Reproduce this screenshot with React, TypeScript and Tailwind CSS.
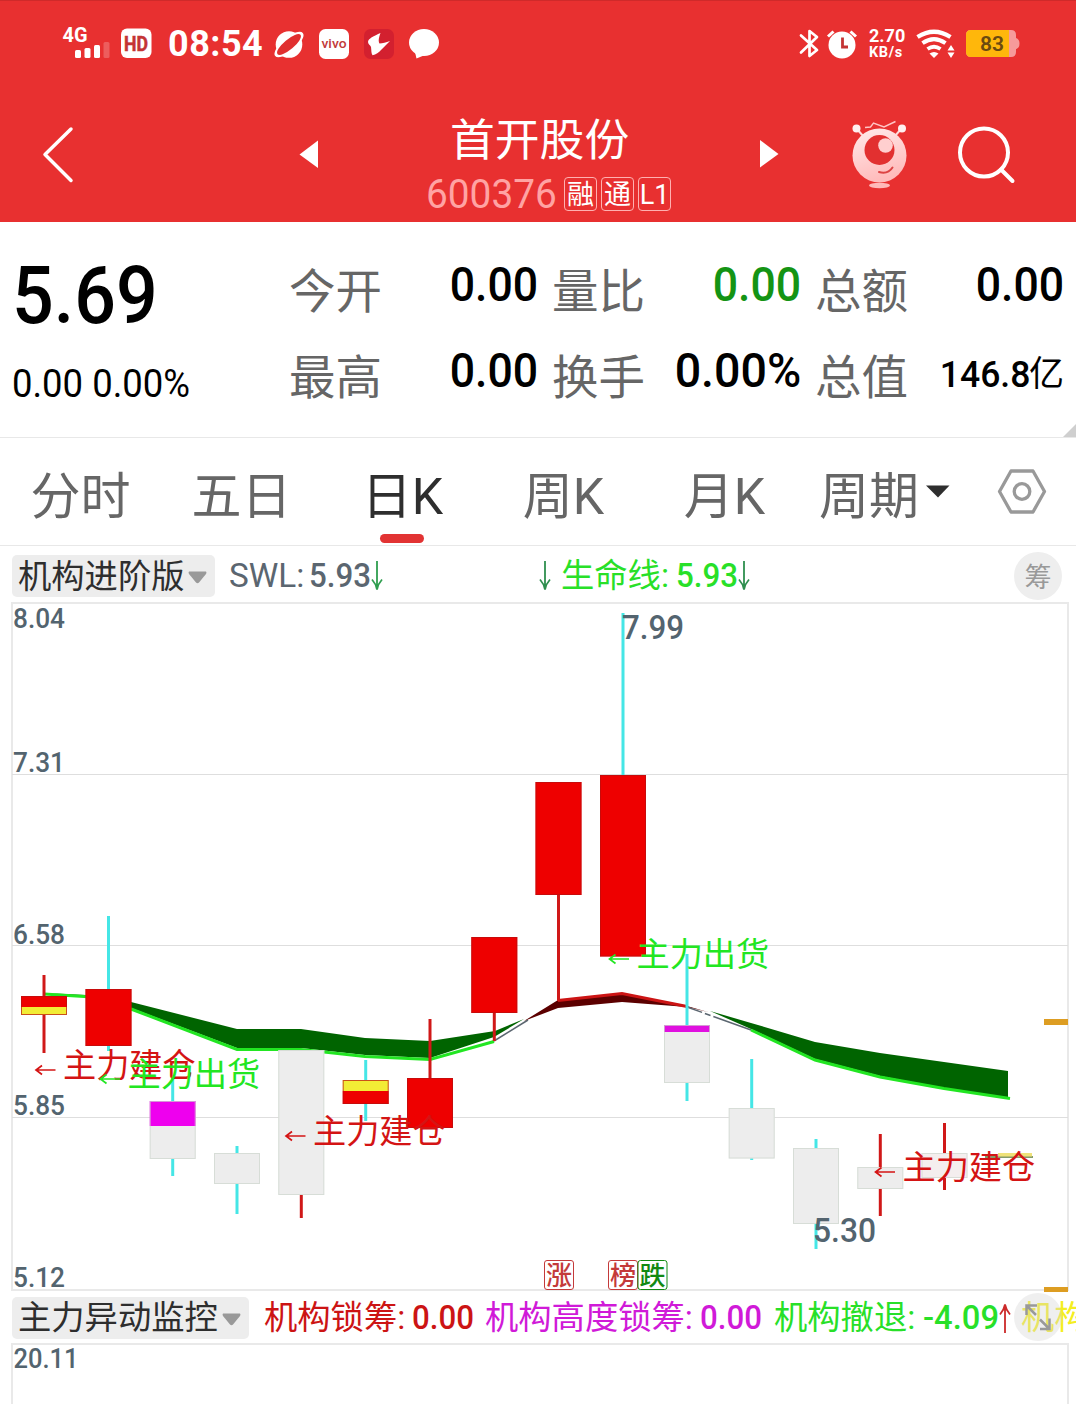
import type { ReactNode } from 'react';

type Candle = {
  x: number;
  top: number;
  bottom: number;
  wick: [number, number];
  wickColor: string;
  parts: { color: string; from: number; to: number }[];
};

const RED = '#ee0000';
const WICK_RED = '#d01818';
const CYAN = '#45e6e6';
const GREY = '#ededed';
const YELLOW = '#f2ec35';
const MAGENTA = '#ee00ee';

const quotes = [
  { label: '今开', value: '0.00' },
  { label: '量比', value: '0.00', color: 'text-[#149414]' },
  { label: '总额', value: '0.00' },
  { label: '最高', value: '0.00' },
  { label: '换手', value: '0.00%' },
  { label: '总值', value: '146.8', unit: '亿' },
];

const tabs = ['分时', '五日', '日K', '周K', '月K'];

const gridLines = [775, 946, 1118];

const axisLabels = [
  { text: '8.04', y: 628 },
  { text: '7.31', y: 772 },
  { text: '6.58', y: 944 },
  { text: '5.85', y: 1115 },
  { text: '5.12', y: 1287 },
];

const candles: Candle[] = [
  { x: 44, top: 996, bottom: 1015, wick: [975, 1053], wickColor: WICK_RED, parts: [{ color: RED, from: 996, to: 1007 }, { color: YELLOW, from: 1007, to: 1015 }] },
  { x: 108.5, top: 989, bottom: 1046, wick: [916, 1051], wickColor: CYAN, parts: [{ color: RED, from: 989, to: 1046 }] },
  { x: 172.7, top: 1101, bottom: 1159, wick: [1075, 1176], wickColor: CYAN, parts: [{ color: MAGENTA, from: 1101, to: 1126 }, { color: GREY, from: 1126, to: 1159 }] },
  { x: 237, top: 1153, bottom: 1184, wick: [1146, 1214], wickColor: CYAN, parts: [{ color: GREY, from: 1153, to: 1184 }] },
  { x: 301.3, top: 1050, bottom: 1195, wick: [1050, 1218], wickColor: WICK_RED, parts: [{ color: GREY, from: 1050, to: 1195 }] },
  { x: 365.7, top: 1080, bottom: 1104, wick: [1060, 1121], wickColor: CYAN, parts: [{ color: YELLOW, from: 1080, to: 1091 }, { color: RED, from: 1091, to: 1104 }] },
  { x: 430, top: 1078, bottom: 1128, wick: [1019, 1128], wickColor: WICK_RED, parts: [{ color: RED, from: 1078, to: 1128 }] },
  { x: 494.3, top: 937, bottom: 1013, wick: [937, 1041], wickColor: WICK_RED, parts: [{ color: RED, from: 937, to: 1013 }] },
  { x: 558.5, top: 782, bottom: 895, wick: [782, 1001], wickColor: WICK_RED, parts: [{ color: RED, from: 782, to: 895 }] },
  { x: 623, top: 775, bottom: 956.5, wick: [613, 956], wickColor: CYAN, parts: [{ color: RED, from: 775, to: 956.5 }] },
  { x: 687, top: 1025, bottom: 1083, wick: [954, 1101], wickColor: CYAN, parts: [{ color: '#e010e0', from: 1025, to: 1032 }, { color: GREY, from: 1032, to: 1083 }] },
  { x: 751.7, top: 1108, bottom: 1158.5, wick: [1059, 1160], wickColor: CYAN, parts: [{ color: GREY, from: 1108, to: 1158.5 }] },
  { x: 816, top: 1148, bottom: 1224, wick: [1139, 1249], wickColor: CYAN, parts: [{ color: GREY, from: 1148, to: 1224 }] },
  { x: 880.3, top: 1167, bottom: 1189, wick: [1134, 1216], wickColor: WICK_RED, parts: [{ color: GREY, from: 1167, to: 1189 }] },
  { x: 944.5, top: 1153, bottom: 1178, wick: [1123, 1190], wickColor: WICK_RED, parts: [{ color: '#f4eeee', from: 1153, to: 1178 }] },
];

const signals = [
  { text: '主力建仓', x: 36, y: 1077, color: '#d41414' },
  { text: '主力出货', x: 100.5, y: 1086, color: '#22e622' },
  { text: '主力建仓', x: 286, y: 1143, color: '#d41414' },
  { text: '主力出货', x: 609.5, y: 966, color: '#22e622' },
  { text: '主力建仓', x: 875.5, y: 1179, color: '#d41414' },
];

function StatusBar() {
  return (
    <div className="flex h-[88px] items-start pt-[26px] text-white">
      <svg className="ml-[60px] h-9 w-[50px] overflow-visible" viewBox="60 26 50 36" fill="#fff">
        <text x="62.5" y="42" fontSize="20.500" fontWeight="700" textLength="25" lengthAdjust="spacingAndGlyphs">4G</text>
        <rect x="75" y="50" width="6" height="8" rx="1.5" />
        <rect x="84.500" y="48" width="6" height="10" rx="1.5" />
        <rect x="94" y="45" width="6" height="13" rx="1.5" />
        <rect x="103.500" y="42" width="6" height="16" rx="1.5" opacity=".22" />
      </svg>
      <svg className="ml-[10px] h-9 w-8" viewBox="120 26 32 36">
        <rect x="121" y="28.500" width="30.500" height="29.500" rx="6" fill="#fff" />
        <text x="124" y="50.500" fontSize="20" fontWeight="700" fill="#c43434" stroke="#c43434" strokeWidth=".5" textLength="24" lengthAdjust="spacingAndGlyphs">HD</text>
      </svg>
      <span className="ml-[16px] w-[94px] text-[36px] leading-9 font-bold tracking-[0.500px]">08:54</span>
      <svg className="ml-[11px] h-9 w-8 overflow-visible" viewBox="273 26 32 36">
        <circle cx="289" cy="44.500" r="13.300" fill="#fff" />
        <ellipse cx="289" cy="44.500" rx="18" ry="7" transform="rotate(-40 289 44.500)" fill="#fff" />
        <ellipse cx="289" cy="44.500" rx="15" ry="5" transform="rotate(-40 289 44.500)" fill="#e03030" />
      </svg>
      <svg className="ml-[13px] h-9 w-8" viewBox="318 26 32 36">
        <rect x="319" y="29" width="30" height="30" rx="6.500" fill="#fff" />
        <text x="321.500" y="48" fontSize="12" fontWeight="500" fill="#c23a3a" textLength="25" lengthAdjust="spacingAndGlyphs">vivo</text>
      </svg>
      <svg className="ml-[13px] h-9 w-8" viewBox="363 26 32 36">
        <rect x="364" y="29" width="30" height="30" rx="6.500" fill="#d3202f" />
        <path d="M380.500 33C374 36 368 38.500 368 42C368 44.500 370.500 45.200 371 47C371.500 50 371 53 372.500 55.300C376 54.500 379 52.500 381 50L390 41C386 42.600 382.500 43.500 379.500 43.500C378 41 379 37 380.500 33Z" fill="#fff" />
      </svg>
      <svg className="ml-[13px] h-9 w-8" viewBox="408 26 32 36" fill="#fff">
        <ellipse cx="424" cy="42.500" rx="15" ry="13.500" />
        <path d="M414.500 50L416.500 58.500L425 55Z" />
      </svg>
      <svg className="ml-[357px] h-9 w-6" viewBox="797 26 24 36" fill="none" stroke="#fff" strokeWidth="2.700">
        <path d="M801 35.500L817 50L809.500 56V31L817 37L801 52.500" strokeLinejoin="round" strokeLinecap="round" />
      </svg>
      <svg className="ml-[5px] h-9 w-8" viewBox="826 26 32 36">
        <circle cx="842" cy="45" r="13.500" fill="#fff" />
        <path d="M828 36.500L833.500 31.500M856 36.500L850.500 31.500" stroke="#fff" strokeWidth="3" />
        <path d="M842.500 37.500V47H848" fill="none" stroke="#c43434" strokeWidth="2.800" />
      </svg>
      <div className="ml-[11px] flex w-[37px] flex-col pt-px font-bold">
        <span className="text-[18px] leading-[18px]">2.70</span>
        <span className="pt-px text-[14.500px] leading-[14px] tracking-[0.600px]">KB/s</span>
      </div>
      <svg className="ml-[10px] h-9 w-10" viewBox="916 26 40 36" fill="none" stroke="#fff">
        <path d="M917.500 37Q934 26.500 950.500 37" strokeWidth="4.200" />
        <path d="M922.500 43.200Q934 35 945.500 43.200" strokeWidth="4" />
        <path d="M927.500 49Q934 44.500 940.500 49" strokeWidth="3.800" />
        <path d="M929.500 53.500Q934 50.500 938.500 53.500L934 58Z" fill="#fff" stroke="none" />
        <path d="M947.500 50.500L951 45L954.500 50.500ZM947.500 52.500H954.500L951 58Z" fill="#fff" stroke="none" />
      </svg>
      <svg className="ml-[10px] h-9 w-14" viewBox="966 26 56 36">
        <path d="M971 30H1011Q1016 30 1016 35V38Q1019.500 39 1019.500 43.500T1016 49V52Q1016 57 1011 57H971Q966 57 966 52V35Q966 30 971 30Z" fill="#f69a9a" />
        <path d="M971 30H1009V57H971Q966 57 966 52V35Q966 30 971 30Z" fill="#ffb70b" />
        <text x="980" y="51" fontSize="20.500" fontWeight="600" fill="#6b4a10" textLength="24" lengthAdjust="spacingAndGlyphs">83</text>
      </svg>
    </div>
  );
}

function Tag({ children }: { children: ReactNode }) {
  return (
    <span className="flex h-[34px] w-[33px] items-center justify-center rounded-[4px] border border-[#ffb0b0] text-[27px] leading-none text-white">
      <span className="pt-[3px]">{children}</span>
    </span>
  );
}

function TitleBar() {
  return (
    <div className="flex h-[134px] items-start">
      <svg className="ml-10 h-[134px] w-9" viewBox="40 88 36 134" fill="none" stroke="#fff" strokeWidth="3.500" strokeLinecap="round" strokeLinejoin="round">
        <path d="M71 129L45 154.500L71 180.500" />
      </svg>
      <svg className="ml-[222px] h-[134px] w-6" viewBox="298 88 24 134" fill="#fff">
        <path d="M299.500 154.500L318 140.500V168Z" />
      </svg>
      <div className="ml-[104px] flex w-[245px] flex-col">
        <h1 className="mt-[30px] ml-6 text-[44.800px] leading-[46px] whitespace-nowrap text-white">首开股份</h1>
        <div className="mt-[13px] flex items-center gap-1">
          <span className="mr-[5px] block w-[129px] origin-left scale-x-[0.935] text-[41.500px] leading-[34px] text-[#ffa3a3]">600376</span>
          <Tag>融</Tag>
          <Tag>通</Tag>
          <Tag>L1</Tag>
        </div>
      </div>
      <svg className="ml-[87px] h-[134px] w-6" viewBox="758 88 24 134" fill="#fff">
        <path d="M760 140V167.500L778.500 154Z" />
      </svg>
      <svg className="ml-[68px] h-[134px] w-[60px]" viewBox="850 88 60 134">
        <defs>
          <linearGradient id="body" x1="0" y1="0" x2="0.300" y2="1">
            <stop offset="0" stopColor="#ffeaea" />
            <stop offset="1" stopColor="#ffbcbc" />
          </linearGradient>
        </defs>
        <path d="M856 128L864 137M902 128L894 137" stroke="#ffd9d9" strokeWidth="2" />
        <circle cx="856.500" cy="128.500" r="4" fill="#fff0f0" />
        <circle cx="902" cy="128.500" r="4" fill="#fff0f0" />
        <path d="M865 127.500L870.500 127L873.500 123L884 127L895.500 121.500" fill="none" stroke="#ffc6c6" strokeWidth="1.400" />
        <circle cx="879.500" cy="155.500" r="27" fill="url(#body)" />
        <circle cx="879.500" cy="150" r="15" fill="#e23030" />
        <circle cx="885.500" cy="145.500" r="7.300" fill="#ffcfcf" />
        <path d="M879 172Q888 174.500 892.500 167.500" fill="none" stroke="#dd4444" strokeWidth="2" strokeLinecap="round" />
        <ellipse cx="879.500" cy="185.500" rx="10.500" ry="2.700" fill="#ffb9b9" />
      </svg>
      <svg className="ml-[46px] h-[134px] w-[62px]" viewBox="956 88 62 134" fill="none" stroke="#fff" strokeWidth="4" strokeLinecap="round">
        <circle cx="984" cy="152.500" r="24" />
        <path d="M1001 169.500L1012.500 181" />
      </svg>
    </div>
  );
}

function QuotePanel() {
  return (
    <section className="relative flex h-[216px] border-b border-[#e8e8e8] bg-white">
      <div className="w-[289px] pl-3">
        <div className="mt-8 origin-left scale-x-[0.930] text-[79px] leading-[84px] font-medium text-black">5.69</div>
        <div className="mt-7 origin-left scale-x-[0.960] text-[38px] leading-9 whitespace-nowrap text-black">0.00 0.00%</div>
      </div>
      <div className="mt-[42px] mr-3 grid h-[172px] flex-1 grid-cols-3 grid-rows-2 gap-x-[14px]">
        {quotes.map(({ label, value, color, unit }) => (
          <div key={label} className="flex h-[52px] items-center justify-between">
            <span className="pt-1 text-[46.500px] leading-[52px] whitespace-nowrap text-[#666]">{label}</span>
            {unit ? (
              <span className="mb-0.5 flex items-center text-black">
                <span className="-mr-px origin-right scale-x-[0.960] text-[37px] leading-[52px] font-medium">{value}</span>
                <span className="text-[35px] leading-[52px]">{unit}</span>
              </span>
            ) : (
              <span className={`mb-2.5 w-0 text-[49px] leading-[52px] font-medium ${color ?? 'text-black'}`}>
                <span className={`float-right block origin-right whitespace-nowrap ${value.endsWith('%') ? 'scale-x-[0.950]' : 'scale-x-[0.910]'}`}>{value}</span>
              </span>
            )}
          </div>
        ))}
      </div>
      <svg className="absolute right-0 bottom-0 h-[13px] w-[13px]" viewBox="0 0 13 13">
        <path d="M13 0V13H0Z" fill="#cfcfcf" />
      </svg>
    </section>
  );
}

function PeriodTabs() {
  return (
    <nav className="flex h-[108px] border-b border-[#e8e8e8] bg-white text-[50px] text-[#666]">
      {tabs.map((tab) => {
        const active = tab === '日K';
        return (
          <div key={tab} className={`flex w-[161px] flex-col items-center ${active ? 'text-[#2e2e2e]' : ''}`}>
            <span className="mt-6 leading-[70px]">{tab}</span>
            {active && <span className="mt-0.5 -ml-px h-[9px] w-11 rounded-full bg-[#e23333]" />}
          </div>
        );
      })}
      <div className="ml-[14px] flex w-[132px] items-start">
        <span className="mt-6 leading-[70px]">周期</span>
        <svg className="mt-[47px] ml-[7px] h-[13px] w-6 shrink-0" viewBox="0 0 24 13">
          <path d="M0 0.500H23.500L12 12.500Z" fill="#2e2e2e" />
        </svg>
      </div>
      <svg className="mt-[29px] ml-[46px] h-12 w-[50px]" viewBox="0 0 50 48" fill="none" stroke="#999" strokeWidth="3.300" strokeLinejoin="round">
        <path d="M14 4H36L47.500 24.500L36 45H14L2.500 24.500Z" />
        <circle cx="25" cy="24.500" r="7.800" />
      </svg>
    </nav>
  );
}

function IndicatorButton({ children }: { children: ReactNode }) {
  return (
    <button className="flex h-[42px] shrink-0 items-center rounded-[5px] bg-[#ededed] pr-2 pl-[6px] text-[33.300px] leading-none whitespace-nowrap text-[#2e2e2e]">
      <span className="pt-px">{children}</span>
      <svg className="mt-[3px] ml-1 h-[13px] w-[19px]" viewBox="0 0 19 13">
        <path d="M1 0.500H18Q19 1.500 18 3L11 11.500Q9.500 13 8 11.500L1 3Q0 1.500 1 0.500Z" fill="#999" />
      </svg>
    </button>
  );
}

function Arrow({ up, color }: { up?: boolean; color: string }) {
  return (
    <svg className={`h-[30px] w-3 shrink-0 ${up ? 'rotate-180' : ''}`} viewBox="0 0 12 30" fill="none" stroke={color} strokeWidth="1.800">
      <path d="M6 0V28.500M1 18.500Q5 23 6 28.500Q7 23 11 18.500" />
    </svg>
  );
}

// Label and figure share one line but the figure is set heavier
function Reading({ label, value, width, color }: { label: string; value: string; width: number; color: string }) {
  return (
    <svg className="h-[42px] shrink-0 overflow-visible" style={{ width }} viewBox={`0 0 ${width} 42`} fill={color}>
      <text x="0" y="32" fontSize="33.300">{label}</text>
      <text x={width} y="32" fontSize="34" fontWeight="500" textAnchor="end" textLength={value.length > 4 ? 76 : 62} lengthAdjust="spacingAndGlyphs">{value}</text>
    </svg>
  );
}

function MainIndicatorRow() {
  return (
    <div className="flex h-14 items-center bg-white pt-1 pl-3">
      <div className="flex w-[217px] items-center">
        <IndicatorButton>机构进阶版</IndicatorButton>
      </div>
      <Reading label="SWL:" value="5.93" width={142} color="#5b6670" />
      <Arrow color="#2f9e4f" />
      <div className="ml-[156px] flex items-center">
        <Arrow color="#2f8f4f" />
        <div className="ml-[10px] flex items-center">
          <Reading label="生命线:" value="5.93" width={177} color="#28e028" />
          <Arrow color="#2f8f4f" />
        </div>
      </div>
      <span className="ml-[264px] flex h-12 w-12 items-center justify-center rounded-full bg-[#eeeeee] text-[27px] leading-none text-[#999]">
        <span className="pt-1">筹</span>
      </span>
    </div>
  );
}

function KChart() {
  return (
    <svg className="block h-[690px] w-full bg-white" viewBox="0 602 1076 690">
      <path d="M12 603H1068V1290H12Z" fill="none" stroke="#e9e9e9" strokeWidth="2" />
      {gridLines.map((y) => (
        <path key={y} d={`M12 ${y - 0.5}H1068`} stroke="#dedede" strokeWidth="1.200" />
      ))}

      {/* trend band */}
      <path d="M44 993L108 996L131 1002L237 1029H301L365 1038L430 1041L495 1031L524 1019L494 1037L430 1058L365 1055L301 1048H237L131 1008L108 998Z" fill="#006400" />
      <path d="M44 994L108 998L131 1009L237 1049.500H301L365 1056.500L430 1059.500L494 1041.500" fill="none" stroke="#22e622" strokeWidth="3" />
      <path d="M494 1041L528 1020" stroke="#5b6670" strokeWidth="1.500" />
      <path d="M524 1021L558 1000L622 993L687 1006L708 1012L687 1007L622 1002L558 1008Z" fill="#5c0000" />
      <path d="M558 1000.500L622 993.500L687 1006.500" fill="none" stroke="#cc1414" strokeWidth="3" />
      <path d="M687 1007L751 1030" stroke="#5b6670" strokeWidth="1.500" strokeDasharray="16 3 6 3 60" />
      <path d="M710 1011L751 1023L815 1042L880 1053L944 1062L1008 1071V1098L944 1088L880 1076L815 1059L751 1029Z" fill="#006400" />
      <path d="M751 1030L815 1060L880 1077L944 1088.500L1010 1098.500" fill="none" stroke="#22e622" strokeWidth="3" />

      {candles.map((c) => {
        const hollow = c.parts.every((p) => p.color !== RED);
        return (
          <g key={c.x}>
            <path d={`M${c.x} ${c.wick[0]}V${c.wick[1]}`} stroke={c.wickColor} strokeWidth="3" />
            {c.parts.map((p) => (
              <rect key={p.from} x={c.x - 23} y={p.from} width="46" height={p.to - p.from} fill={p.color} />
            ))}
            <rect
              x={c.x - 22.5}
              y={c.top + 0.5}
              width="45"
              height={c.bottom - c.top - 1}
              fill="none"
              stroke={hollow ? '#cdd6cd' : '#b81010'}
              strokeWidth="1"
              strokeOpacity=".7"
            />
          </g>
        );
      })}
      <path d="M985 1157H1033" stroke="#5c7a3a" strokeWidth="1.500" />
      <path d="M998 1154.700H1032" stroke="#efe27a" strokeWidth="3.500" />

      <path d="M1044 1022H1068M1044 1290H1068" stroke="#dd9d22" strokeWidth="6" />

      {signals.map((s) => (
        <g key={s.x} fill={s.color}>
          <path d={`M${s.x + 6} ${s.y - 11.5}L${s.x} ${s.y - 7}L${s.x + 6} ${s.y - 2.5}M${s.x} ${s.y - 7}H${s.x + 19.5}`} fill="none" stroke={s.color} strokeWidth="1.700" />
          <text x={s.x + 27} y={s.y} fontSize="33.200">{s.text}</text>
        </g>
      ))}

      <g fill="#53646f" fontWeight="500">
        {axisLabels.map((l) => (
          <text key={l.text} x="13" y={l.y} fontSize="28" textLength="52" lengthAdjust="spacingAndGlyphs">{l.text}</text>
        ))}
        <text x="622" y="639" fontSize="34" textLength="62" lengthAdjust="spacingAndGlyphs">7.99</text>
        <text x="813" y="1242" fontSize="34" textLength="63" lengthAdjust="spacingAndGlyphs">5.30</text>
      </g>

      {[
        { text: '涨', x: 544, color: '#c43a3a' },
        { text: '榜', x: 608, color: '#c43a3a' },
        { text: '跌', x: 637.5, color: '#128a12' },
      ].map((m) => (
        <g key={m.text}>
          <rect x={m.x + 0.5} y="1260.500" width="29" height="29" rx="2.500" fill="#fff" stroke={m.color} strokeWidth="1" />
          <text x={m.x + 2} y="1285" fontSize="26" fontWeight="500" fill={m.color}>{m.text}</text>
        </g>
      ))}
    </svg>
  );
}

function SubIndicatorRow() {
  return (
    <div className="relative flex h-[51px] items-center overflow-hidden bg-white pl-3">
      <div className="flex w-[252px] shrink-0 items-center">
        <IndicatorButton>主力异动监控</IndicatorButton>
      </div>
      <Reading label="机构锁筹:" value="0.00" width={210} color="#cc1414" />
      <div className="ml-[11px] flex items-center">
        <Reading label="机构高度锁筹:" value="0.00" width={277} color="#d01ad8" />
      </div>
      <div className="ml-3 flex items-center">
        <Reading label="机构撤退:" value="-4.09" width={225} color="#28e028" />
        <Arrow up color="#cc2a2a" />
      </div>
      <span className="ml-[10px] flex-none text-[33.300px] leading-[42px] whitespace-nowrap text-[#f4ee20]">机构</span>
      <svg className="absolute top-px right-[14px] h-12 w-12" viewBox="0 0 48 48">
        <circle cx="24" cy="24" r="24" fill="#d4d4d4" fillOpacity=".38" />
        <path d="M23 12.500H12.500V22M12.500 12.500L22 22M26 36H35.500V25.500M35.500 36L26 26.500" fill="none" stroke="#999" strokeWidth="2.500" />
      </svg>
    </div>
  );
}

export default function App() {
  return (
    <div className="h-[1404px] w-[1076px] overflow-hidden bg-white font-[Roboto,'Noto_Sans_CJK_SC',sans-serif]">
      <header className="h-[222px] bg-[#e83030] shadow-[inset_0_1px_0_#cf2a2a]">
        <StatusBar />
        <TitleBar />
      </header>
      <QuotePanel />
      <PeriodTabs />
      <MainIndicatorRow />
      <KChart />
      <SubIndicatorRow />
      <div className="mr-[7px] ml-[11px] h-[70px] border-2 border-[#e9e9e9]">
        <svg className="block h-8 w-[70px]" viewBox="0 0 70 32">
          <text x="0.500" y="23" fontSize="28" fontWeight="500" fill="#53646f" textLength="65" lengthAdjust="spacingAndGlyphs">20.11</text>
        </svg>
      </div>
    </div>
  );
}
